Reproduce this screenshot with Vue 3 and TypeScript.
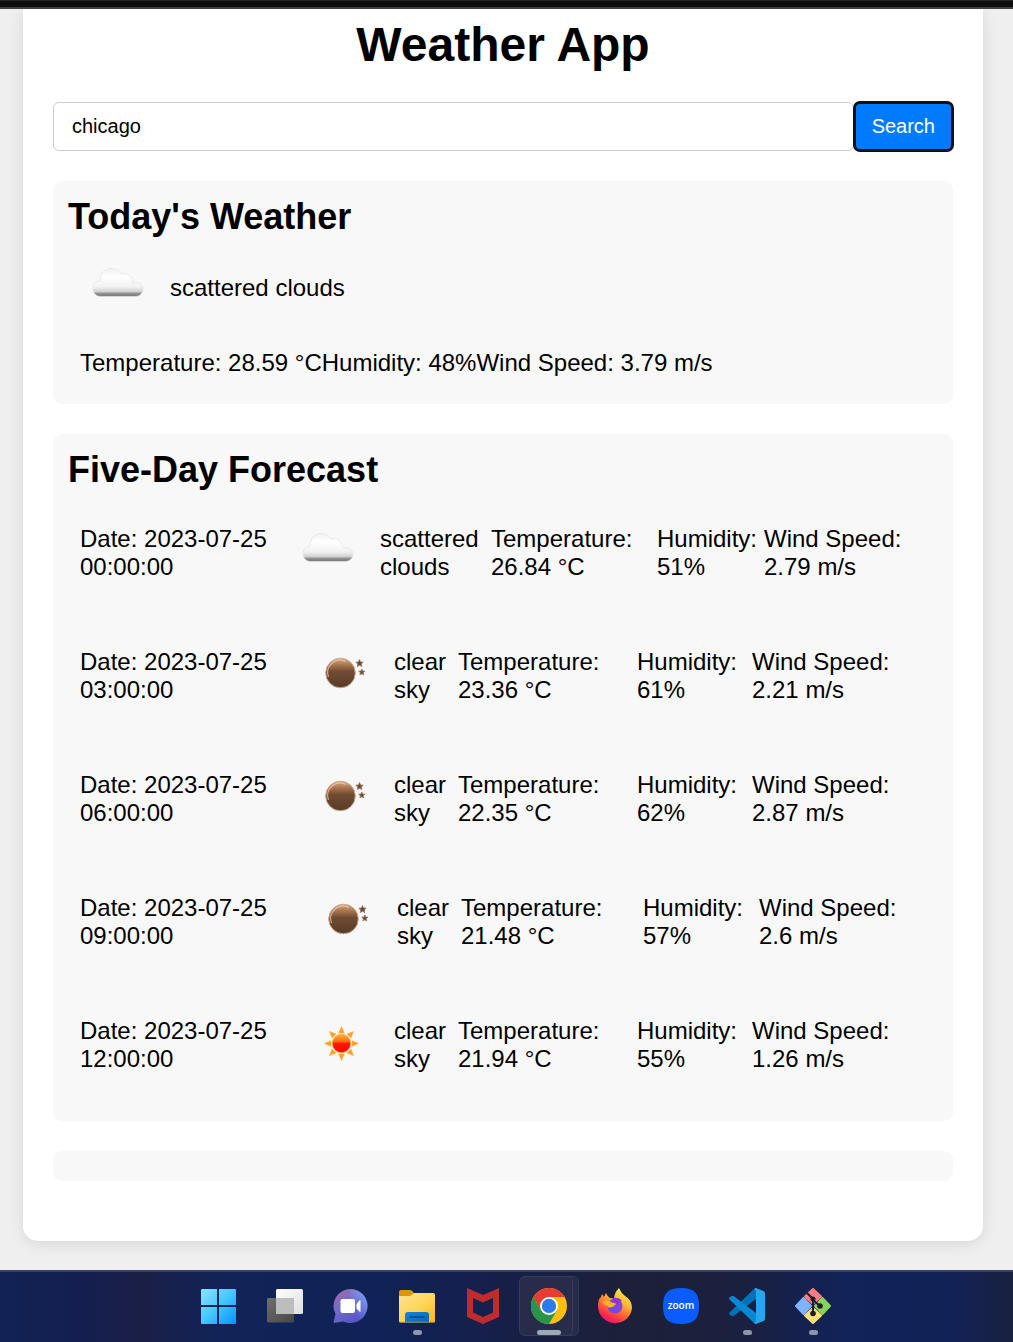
<script setup lang="ts">
import { ref } from 'vue'

type Sky = 'cloud' | 'moon' | 'sun'

interface Forecast {
  date: string
  time: string
  sky: Sky
  description: string
  temperature: string
  humidity: string
  wind: string
  columns: 'wide' | 'regular' | 'short'
}

const city = ref('chicago')

const forecasts: Forecast[] = [
  { date: '2023-07-25', time: '00:00:00', sky: 'cloud', description: 'scattered clouds', temperature: '26.84', humidity: '51%', wind: '2.79', columns: 'wide' },
  { date: '2023-07-25', time: '03:00:00', sky: 'moon', description: 'clear sky', temperature: '23.36', humidity: '61%', wind: '2.21', columns: 'regular' },
  { date: '2023-07-25', time: '06:00:00', sky: 'moon', description: 'clear sky', temperature: '22.35', humidity: '62%', wind: '2.87', columns: 'regular' },
  { date: '2023-07-25', time: '09:00:00', sky: 'moon', description: 'clear sky', temperature: '21.48', humidity: '57%', wind: '2.6', columns: 'short' },
  { date: '2023-07-25', time: '12:00:00', sky: 'sun', description: 'clear sky', temperature: '21.94', humidity: '55%', wind: '1.26', columns: 'regular' },
]

const rays = [0, 45, 90, 135, 180, 225, 270, 315]
</script>

<template>
  <div class="screen">
    <svg class="defs" width="0" height="0" aria-hidden="true">
      <defs>
        <linearGradient id="cloudFill" x1="0" y1="0" x2="0" y2="1">
          <stop offset="0" stop-color="#f1f1f1" />
          <stop offset="0.3" stop-color="#ffffff" />
          <stop offset="0.65" stop-color="#f2f2f2" />
          <stop offset="0.82" stop-color="#d2d2d2" />
          <stop offset="0.9" stop-color="#8c8c8c" />
          <stop offset="1" stop-color="#777777" />
        </linearGradient>
        <linearGradient id="moonFill" x1="0" y1="0" x2="0" y2="1">
          <stop offset="0" stop-color="#dba985" />
          <stop offset="0.2" stop-color="#b07a55" />
          <stop offset="0.45" stop-color="#714b32" />
          <stop offset="1" stop-color="#583b28" />
        </linearGradient>
        <linearGradient id="sunFill" x1="0" y1="0" x2="0" y2="1">
          <stop offset="0" stop-color="#ffb52e" />
          <stop offset="0.4" stop-color="#fb6a10" />
          <stop offset="0.5" stop-color="#ff1500" />
          <stop offset="1" stop-color="#ff0a00" />
        </linearGradient>
        <filter id="soft"><feGaussianBlur stdDeviation="0.5" /></filter>
      </defs>
      <symbol id="sky-cloud" viewBox="0 0 75 75">
        <path d="M21 46.500C16 46.500 13 43 13 39C13 34 16 31 20 31C20 23 25 18.500 31 18.500C35 18.500 39 20 41 24C47 22 52 26 53 33C59 31 63 35 63 39C63 43 60 46.500 55 46.500Z" fill="url(#cloudFill)" stroke="#e2e2e2" stroke-width="1" stroke-opacity="0.7" filter="url(#soft)" />
      </symbol>
      <symbol id="sky-moon" viewBox="0 0 75 75">
        <g filter="url(#soft)">
          <circle cx="36.500" cy="35" r="14.800" fill="url(#moonFill)" stroke="#c9a88f" stroke-width="1" />
          <path d="M24.500 39A12.500 12.500 0 0 1 42 23.500" fill="none" stroke="#f3d3bb" stroke-width="1.200" opacity="0.7" />
          <path d="M55.500 21.500l1 2.500 2.700.2-2 1.700.6 2.700-2.300-1.400-2.300 1.400.6-2.700-2-1.700 2.700-.2zM57.800 31l.8 2 2.300.2-1.700 1.500.5 2.200-1.900-1.200-1.900 1.200.5-2.200-1.700-1.500 2.300-.2z" fill="#6b4833" stroke="#98745d" stroke-width="0.800" />
        </g>
      </symbol>
      <symbol id="sky-sun" viewBox="0 0 75 75">
        <g filter="url(#soft)">
          <path v-for="angle in rays" :key="angle" d="M37.500 19.500l2.800 6.500h-5.600z" fill="#ff9d1c" stroke="#ffb54d" stroke-width="0.600" :transform="`rotate(${angle} 37.500 36.500)`" />
          <circle cx="37.500" cy="36.500" r="9.300" fill="url(#sunFill)" stroke="#ffb054" stroke-width="1" />
        </g>
      </symbol>
    </svg>

    <div class="top-edge"></div>

    <main class="page">
      <div class="card">
        <h1>Weather App</h1>
        <form class="search" @submit.prevent>
          <input v-model="city" type="text" aria-label="City" />
          <button type="submit">Search</button>
        </form>

        <section class="panel">
          <h2>Today's Weather</h2>
          <div class="line">
            <svg class="sky" role="img" aria-label="Cloudy"><use href="#sky-cloud" /></svg>
            <p>scattered clouds</p>
          </div>
          <div class="line">
            <p>Temperature: 28.59 °C</p>
            <p>Humidity: 48%</p>
            <p>Wind Speed: 3.79 m/s</p>
          </div>
        </section>

        <section class="panel">
          <h2>Five-Day Forecast</h2>
          <div class="forecasts">
            <div v-for="item in forecasts" :key="item.time" class="forecast" :class="item.columns">
              <p>Date: {{ item.date }} {{ item.time }}</p>
              <svg class="sky" aria-hidden="true"><use :href="`#sky-${item.sky}`" /></svg>
              <p>{{ item.description }}</p>
              <p>Temperature: {{ item.temperature }} °C</p>
              <p>Humidity: {{ item.humidity }}</p>
              <p>Wind Speed: {{ item.wind }} m/s</p>
            </div>
          </div>
        </section>

        <section class="panel"></section>
      </div>
    </main>

    <nav class="taskbar" aria-label="Taskbar">
      <button type="button" aria-label="Start">
        <svg viewBox="0 0 36 36">
          <defs>
            <linearGradient id="win" x1="0" y1="0" x2="1" y2="1"><stop offset="0" stop-color="#8be4ff" /><stop offset="0.5" stop-color="#44c6ff" /><stop offset="1" stop-color="#0892ff" /></linearGradient>
          </defs>
          <path d="M1 1H16V17H0V2Q0 1 1 1ZM18 1H34Q35 1 35 2V17H18ZM0 19H16V36H1Q0 36 0 35ZM18 19H35V35Q35 36 34 36H18Z" fill="url(#win)" />
        </svg>
      </button>
      <button type="button" aria-label="Task view">
        <svg viewBox="0 0 36 36">
          <defs>
            <linearGradient id="tv1" x1="0" y1="0" x2="1" y2="1"><stop offset="0" stop-color="#fff" /><stop offset="1" stop-color="#dedede" /></linearGradient>
            <linearGradient id="tv2" x1="0" y1="0" x2="1" y2="1"><stop offset="0" stop-color="#6f6f6f" /><stop offset="1" stop-color="#474747" /></linearGradient>
          </defs>
          <rect x="0" y="10" width="27" height="24.500" rx="1.500" fill="url(#tv2)" />
          <rect x="9" y="1" width="27" height="25" rx="1.500" fill="url(#tv1)" />
          <path d="M9 10H27V26H10.500Q9 26 9 24.500Z" fill="#bdbdbd" />
        </svg>
      </button>
      <button type="button" aria-label="Chat">
        <svg viewBox="0 0 36 36">
          <defs>
            <linearGradient id="chat" x1="0.100" y1="0" x2="0.800" y2="1"><stop offset="0" stop-color="#a56aa8" /><stop offset="0.4" stop-color="#746bc8" /><stop offset="1" stop-color="#5050c4" /></linearGradient>
            <linearGradient id="chatGlow" x1="0.400" y1="0.600" x2="1" y2="0.200"><stop offset="0" stop-color="#80b0ff" stop-opacity="0" /><stop offset="1" stop-color="#7eb6ff" /></linearGradient>
          </defs>
          <path d="M17.500 1A17 17 0 1 1 10.500 33.500L1 35Q0.500 35 0.700 34L2.500 26A17 17 0 0 1 17.500 1Z" fill="url(#chat)" />
          <path d="M17.500 1A17 17 0 1 1 10.500 33.500Z" fill="url(#chatGlow)" opacity="0.7" />
          <rect x="7.500" y="11" width="14.500" height="14" rx="2" fill="#fff" />
          <path d="M24 16L27 12.500V23.500L24 20.500Z" fill="#fff" stroke="#fff" stroke-linejoin="round" />
        </svg>
      </button>
      <button type="button" class="open" aria-label="File Explorer">
        <svg viewBox="0 0 36 36">
          <defs>
            <linearGradient id="folder" x1="0" y1="0" x2="1" y2="1"><stop offset="0" stop-color="#ffe493" /><stop offset="0.5" stop-color="#ffd65a" /><stop offset="1" stop-color="#fbb91b" /></linearGradient>
            <linearGradient id="drawer" x1="0" y1="0" x2="1" y2="1"><stop offset="0" stop-color="#1686da" /><stop offset="1" stop-color="#0863bb" /></linearGradient>
          </defs>
          <path d="M0 4Q0 2 2 2H11Q13 2 14 4L16 6V12H0Z" fill="#d99a05" />
          <path d="M0 8H10Q12 8 13 6.500Q14 5 16 5H34Q36 5 36 7V33Q36 34.500 34.500 34.500H1.500Q0 34.500 0 33Z" fill="url(#folder)" />
          <path d="M6 34.500V27Q6 24 9 24H27Q30 24 30 27V34.500Z" fill="url(#drawer)" />
          <path d="M11 29H25" stroke="#064984" stroke-width="1.500" stroke-linecap="round" />
          <path d="M0 34H36" stroke="#d59a22" stroke-width="1" opacity="0.5" />
        </svg>
      </button>
      <button type="button" aria-label="McAfee">
        <svg viewBox="0 0 36 36">
          <path d="M2 0L18 7L34 0V29L18 36L2 29ZM8 10V24.500L18 29L28 24.500V10L18 14.500Z" fill="#be2c2e" fill-rule="evenodd" />
        </svg>
      </button>
      <button type="button" class="active" aria-label="Google Chrome">
        <svg viewBox="0 0 36 36">
          <circle cx="18" cy="18" r="18" fill="#fcbf0b" />
          <path d="M2.400 9A18 18 0 0 1 33.600 9H18L10.200 22.500Z" fill="#e63c31" />
          <path d="M2.400 9A18 18 0 0 0 18 36L25.800 22.500L18 20L10.200 22.500Z" fill="#299647" />
          <circle cx="18" cy="18" r="9" fill="#fff" />
          <circle cx="18" cy="18" r="7.200" fill="#2b7bed" />
        </svg>
      </button>
      <button type="button" aria-label="Firefox">
        <svg viewBox="0 0 36 36">
          <defs>
            <linearGradient id="fox" x1="0.800" y1="0" x2="0.250" y2="1"><stop offset="0" stop-color="#fff44f" /><stop offset="0.35" stop-color="#ffba36" /><stop offset="0.6" stop-color="#ff6b36" /><stop offset="0.85" stop-color="#fa254e" /><stop offset="1" stop-color="#e31587" /></linearGradient>
            <linearGradient id="globe" x1="0" y1="1" x2="1" y2="0"><stop offset="0" stop-color="#5657d8" /><stop offset="1" stop-color="#a334dc" /></linearGradient>
          </defs>
          <path d="M1 18Q1 11 4 9L5 6L7 9L9 5Q10 8 13 10Q16 10 17 11Q17 5 22 0Q24 5 28 8Q35 12 35 20C34 29 27 35 18 35S1 28 1 18Z" fill="url(#fox)" />
          <circle cx="18" cy="18" r="7.500" fill="url(#globe)" />
          <path d="M16 10Q22 9 25 13L22 14Q21 17 18 18L15 15Z" fill="#8a35d8" />
          <path d="M5 14Q10 11 15 14.500L19 15.500Q18 18.500 13 19.500Q11 20 10.500 18Q7 17 5 14Z" fill="#ffac30" />
        </svg>
      </button>
      <button type="button" aria-label="Zoom">
        <svg viewBox="0 0 36 36">
          <path d="M18 0C31 0 36 5 36 18S31 36 18 36S0 31 0 18S5 0 18 0Z" fill="#0b5cff" />
          <text x="18" y="21" text-anchor="middle" font-family="Open Sans, sans-serif" font-size="10" font-weight="600" fill="#fff">zoom</text>
        </svg>
      </button>
      <button type="button" class="open" aria-label="Visual Studio Code">
        <svg viewBox="0 0 36 36">
          <path d="M1 24Q-1 26 1 27L3 28Q4 29 6 27L27 11V0L25 1Z" fill="#0072b8" />
          <path d="M1 12Q-1 10 1 9L3 8Q4 7 6 9L27 25V36L25 35Z" fill="#0788d0" />
          <path d="M27 0L34.500 3Q36 4 36 5V31Q36 32 34.500 33L27 36Q26 36 25 35L27 33V3L25 1Z" fill="#27a5ef" />
        </svg>
      </button>
      <button type="button" class="open" aria-label="Git">
        <svg viewBox="0 0 36 36">
          <path d="M18 1L26 8.500L18 16L10 8.500Z" fill="#ff7c80" stroke="#ff7c80" stroke-width="2" stroke-linejoin="round" />
          <path d="M8.500 10L16 18L8.500 26L1 18Z" fill="#80b3ff" stroke="#80b3ff" stroke-width="2" stroke-linejoin="round" />
          <path d="M27.500 10L35 18L27.500 26L20 18Z" fill="#87d35b" stroke="#87d35b" stroke-width="2" stroke-linejoin="round" />
          <path d="M18 20L26 27.500L18 35L10 27.500Z" fill="#ffdf7a" stroke="#ffdf7a" stroke-width="2" stroke-linejoin="round" />
          <path d="M12 5L18 11V26M18 12L25 18" fill="none" stroke="#1b1c30" stroke-width="2" />
          <circle cx="18" cy="11" r="2.500" fill="#1b1c30" /><circle cx="18" cy="25.500" r="2.800" fill="#1b1c30" /><circle cx="25" cy="18" r="2.800" fill="#1b1c30" />
        </svg>
      </button>
    </nav>
  </div>
</template>

<style>
body {
  margin: 0;
  background: #efefef;
}
</style>

<style scoped>
.screen {
  font-family: "Liberation Sans", Arial, sans-serif;
  font-size: 24px;
  line-height: 28px;
  color: #000;
}

.defs {
  position: absolute;
}

.top-edge {
  box-sizing: border-box;
  height: 9px;
  background: #0d0d0d;
  border-top: 1px solid #222428;
  border-bottom: 2px solid #404040;
}

.page {
  padding: 0 30px 29px 23px;
  overflow: hidden;
}

.card {
  padding: 8px 30px 60px;
  background: #fff;
  border-radius: 0 0 15px 15px;
  box-shadow: 0 3px 15px rgba(0, 0, 0, 0.1);
}

h1,
h2,
p {
  margin: 0;
}

h1 {
  font-size: 48px;
  line-height: 55px;
  text-align: center;
}

.search {
  display: flex;
  margin-top: 30px;
}

.search input {
  flex: 1;
  min-width: 0;
  height: 49px;
  box-sizing: border-box;
  padding: 0 18px;
  border: 1px solid #ccc;
  border-radius: 6px;
  background: #fff;
  color: #000;
  font: 20px "Liberation Sans", Arial, sans-serif;
}

.search button {
  padding: 0 18px;
  border: 0;
  border-radius: 6px;
  outline: 3px solid #101010;
  outline-offset: -2px;
  background: #007bff;
  color: #fff;
  font: 20px "Liberation Sans", Arial, sans-serif;
}

.panel {
  margin-top: 30px;
  padding: 15px;
  border-radius: 9px;
  background: #f8f8f8;
}

h2 {
  font-size: 36px;
  line-height: 42px;
}

.line {
  display: flex;
  align-items: center;
  padding: 12px;
}

.sky {
  display: block;
  flex: none;
  width: 75px;
  height: 75px;
  margin-right: 15px;
}

.forecasts {
  display: flex;
  flex-direction: column;
  gap: 24px;
  padding: 12px 0;
}

.forecast {
  display: grid;
  align-items: center;
  padding: 12px;
}

.wide {
  grid-template-columns: 210px 90px 111px 166px 107px 1fr;
}

.regular {
  grid-template-columns: 224px 90px 64px 179px 115px 1fr;
}

.short {
  grid-template-columns: 227px 90px 64px 182px 116px 1fr;
}

.taskbar {
  display: flex;
  justify-content: center;
  padding: 4px 0 6px 18px;
  border-top: 2px solid #3a4260;
  background: linear-gradient(90deg, #112254 0%, #141f50 8%, #1b1f46 14%, #102458 22%, #102257 38%, #171f48 50%, #1c2038 62%, #1a2040 74%, #10235a 84%, #112256 94%, #1a2140 100%);
}

.taskbar button {
  position: relative;
  width: 66px;
  height: 60px;
  padding: 0;
  border: 0;
  background: none;
}

.taskbar button svg {
  position: relative;
  display: block;
  width: 36px;
  height: 36px;
  margin: 0 auto;
}

.taskbar .open::after,
.taskbar .active::after {
  content: "";
  position: absolute;
  bottom: 1px;
  left: 50%;
  width: 9px;
  height: 5px;
  margin-left: -4px;
  border-radius: 3px;
  background: #9096aa;
}

.taskbar .active::after {
  width: 24px;
  margin-left: -12px;
  background: #9cabb2;
}

.taskbar .active::before {
  content: "";
  position: absolute;
  top: 0;
  left: 3px;
  box-sizing: border-box;
  width: 54px;
  height: 60px;
  border: 1px solid #363c5a;
  border-radius: 6px;
  background: #262c4a;
  box-shadow: 6px 0 0 -1px #262b48, 6px 0 0 0 #31375a;
}
</style>
